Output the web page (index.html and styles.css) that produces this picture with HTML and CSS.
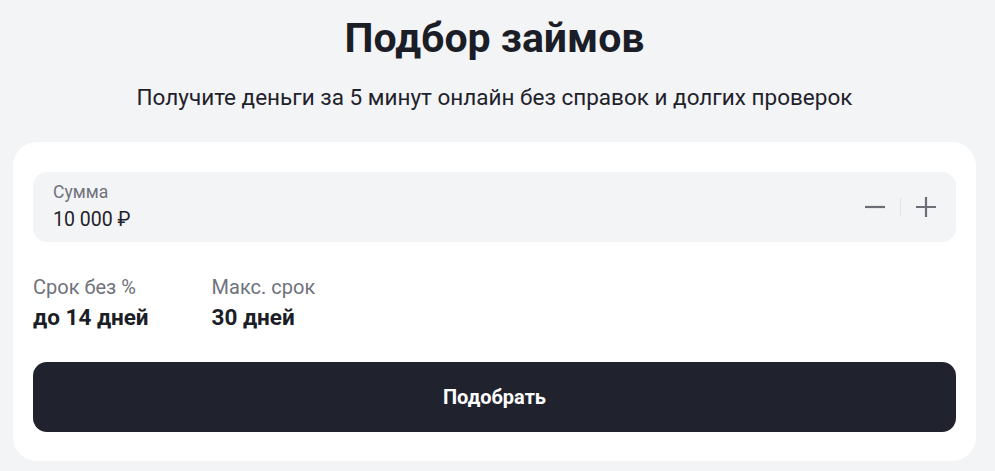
FILE: index.html
```html
<!DOCTYPE html>
<html lang="ru">
<head>
<meta charset="utf-8">
<link rel="stylesheet" href="styles.css">
</head>
<body>
<main class="page">
  <h1 class="title">Подбор займов</h1>
  <p class="subtitle">Получите деньги за 5 минут онлайн без справок и долгих проверок</p>
  <section class="card">
    <div class="amount">
      <div class="amount-text">
        <span class="amount-label">Сумма</span>
        <span class="amount-value">10 000 ₽</span>
      </div>
      <div class="stepper">
        <button class="step" aria-label="Уменьшить">
          <svg width="22" height="22" viewBox="0 0 22 22"><path d="M1 11h20" stroke="currentColor" stroke-width="2.2"/></svg>
        </button>
        <span class="step-divider"></span>
        <button class="step" aria-label="Увеличить">
          <svg width="22" height="22" viewBox="0 0 22 22"><path d="M1 11h20M11 1v20" stroke="currentColor" stroke-width="2.2"/></svg>
        </button>
      </div>
    </div>
    <div class="stats">
      <div class="stat">
        <span class="stat-label">Срок без %</span>
        <span class="stat-value">до 14 дней</span>
      </div>
      <div class="stat">
        <span class="stat-label">Макс. срок</span>
        <span class="stat-value">30 дней</span>
      </div>
    </div>
    <button class="submit">Подобрать</button>
  </section>
</main>
</body>
</html>
```
FILE: styles.css
```css
* { box-sizing: border-box; }
html, body { margin: 0; padding: 0; }
body {
  background: #f3f4f6;
  font-family: Roboto, "Noto Sans", Arial, sans-serif;
  color: #1f222b;
}
.page {
  padding: 13px 19px 0 13px;
  display: flex;
  flex-direction: column;
}
.title {
  margin: 0;
  text-align: center;
  font-size: 41px;
  line-height: 50px;
  font-weight: 700;
  color: #1b1e27;
}
.subtitle {
  margin: 20px 0 0;
  text-align: center;
  font-size: 22.5px;
  line-height: 28px;
  color: #1f222b;
}
.card {
  margin-top: 31px;
  background: #fff;
  border-radius: 24px;
  padding: 30px 20px 29px;
  display: flex;
  flex-direction: column;
}
.amount {
  height: 70px;
  background: #f3f4f6;
  border-radius: 14px;
  display: flex;
  align-items: center;
  justify-content: space-between;
  padding: 0 19px 0 20px;
}
.amount-text {
  display: flex;
  flex-direction: column;
  gap: 6px;
}
.amount-label {
  font-size: 17.5px;
  line-height: 20px;
  color: #6f727b;
}
.amount-value {
  font-size: 19.5px;
  line-height: 24px;
  color: #1f222b;
}
.stepper {
  display: flex;
  align-items: center;
  gap: 14px;
}
.step {
  border: 0;
  background: none;
  padding: 0;
  width: 22px;
  height: 22px;
  color: #6b6e77;
  display: flex;
}
.step-divider {
  width: 1px;
  height: 18px;
  background: #e1e2e6;
}
.stats {
  display: flex;
  gap: 63px;
  margin-top: 33px;
}
.stat {
  display: flex;
  flex-direction: column;
  gap: 5px;
}
.stat-label {
  font-size: 20px;
  line-height: 24px;
  color: #6f727b;
}
.stat-value {
  font-size: 22.5px;
  line-height: 26px;
  font-weight: 700;
  color: #1b1e27;
}
.submit {
  margin-top: 32px;
  height: 70px;
  border: 0;
  border-radius: 14px;
  background: #20232e;
  color: #fff;
  font-family: inherit;
  font-size: 20px;
  font-weight: 700;
}
```
